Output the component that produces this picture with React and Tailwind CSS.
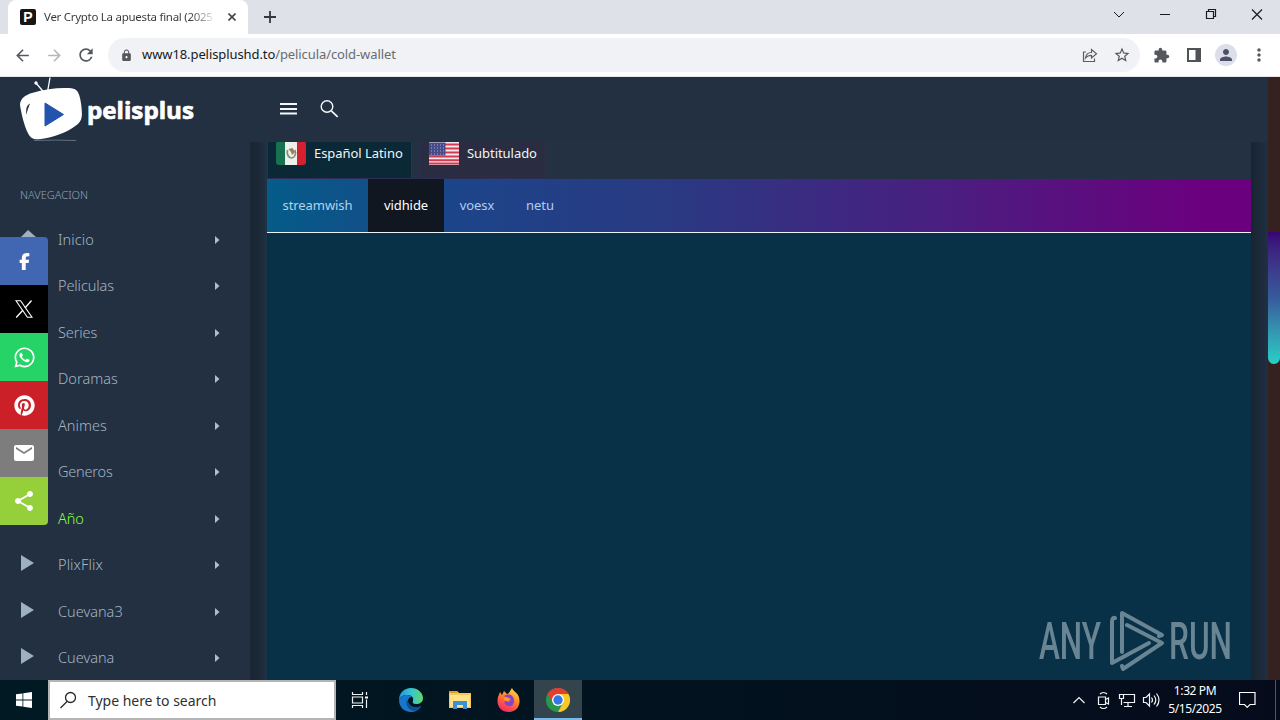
import React from 'react';
import {
  MdArrowBack,
  MdArrowForward,
  MdRefresh,
  MdLock,
  MdStarBorder,
  MdExtension,
  MdPerson,
  MdMoreVert,
  MdEmail,
  MdShare,
} from 'react-icons/md';
import { FaFacebookF, FaWhatsapp, FaPinterest } from 'react-icons/fa6';

const menuItems = [
  { name: 'Inicio', tracking: 'tracking-[0.1px]' },
  { name: 'Peliculas', tracking: 'tracking-[-0.1px]' },
  { name: 'Series', tracking: 'tracking-[-0.1px]' },
  { name: 'Doramas', tracking: 'tracking-[0.05px]' },
  { name: 'Animes', tracking: 'tracking-[0.05px]' },
  { name: 'Generos', tracking: 'tracking-[-0.2px]' },
  { name: 'Año', tracking: 'tracking-[-0.1px]', active: true },
  { name: 'PlixFlix', tracking: 'tracking-[0.1px]', play: true },
  { name: 'Cuevana3', tracking: 'tracking-[0px]', play: true },
  { name: 'Cuevana', tracking: 'tracking-[0px]', play: true },
];

const servers = [
  { name: 'streamwish', className: 'w-[101px] text-[#b3d3ec]' },
  { name: 'vidhide', className: 'w-[76px] bg-[#101720] text-white' },
  { name: 'voesx', className: 'w-[66px] text-[#b0cdf3]' },
  { name: 'netu', className: 'w-[60px] text-[#b0cdf3]' },
];

const XIcon = () => (
  <svg width="18" height="18" viewBox="0 0 18 18" fill="none" stroke="#fff" strokeWidth="1.1">
    <path d="M1 .8h4.600L17 17.200h-4.600z" />
    <path d="M16.500.5L10 8M7.800 10.300L1.200 17.500" strokeWidth="1.300" />
  </svg>
);

const shareButtons = [
  { name: 'facebook', bg: 'bg-[#4267b2] rounded-tr-[4px]', icon: <FaFacebookF size={17} /> },
  { name: 'x', bg: 'bg-black', icon: <XIcon /> },
  { name: 'whatsapp', bg: 'bg-[#25d366]', icon: <FaWhatsapp size={23} /> },
  { name: 'pinterest', bg: 'bg-[#cb2027]', icon: <FaPinterest size={21} /> },
  { name: 'email', bg: 'bg-[#7d7d7d]', icon: <MdEmail size={24} /> },
  { name: 'share', bg: 'bg-[#95d03a] rounded-br-[4px]', icon: <MdShare size={24} /> },
];

const TabStrip = () => (
  <div className="flex h-[34px] bg-[#dee1e8] pl-2">
    <div className="flex h-full w-[240px] items-center rounded-t-lg bg-white pl-3 pr-[10px]">
      <div className="flex h-4 w-4 items-center justify-center rounded-[2px] bg-[#161616] font-['Liberation_Sans',sans-serif] text-[14px] font-bold text-white">
        P
      </div>
      <div className="ml-2 w-[172px] whitespace-nowrap bg-gradient-to-r from-[#35383c] from-85% to-white bg-clip-text text-[11.5px] tracking-[-0.28px] text-transparent">
        Ver Crypto La apuesta final (2025
      </div>
      <svg className="ml-3 shrink-0" width="8" height="8" viewBox="0 0 8 8" stroke="#43474b" strokeWidth="1.6">
        <path d="M.5.5l7 7M7.5.5l-7 7" />
      </svg>
    </div>
    <div className="flex flex-1 items-center">
      <svg className="ml-4" width="12" height="12" viewBox="0 0 12 12" stroke="#35383d" strokeWidth="1.8">
        <path d="M6 0v12M0 6h12" />
      </svg>
    </div>
    <svg width="180" height="34" viewBox="1100 0 180 34" fill="none" stroke="#1b1b1d" strokeWidth="1">
      <path d="M1114 12l5 5 5-5" />
      <path d="M1160 14.5h10" />
      <path d="M1206.5 11.5h7v7h-7zM1208.5 11.500v-2h7v7h-2" strokeWidth="1.2" />
      <path d="M1252 9.500l10 10M1262 9.500l-10 10" strokeWidth="1.2" />
    </svg>
  </div>
);

const Toolbar = () => (
  <div className="flex h-[43px] items-center border-b border-[#e4e7ea] bg-white pl-[13px] text-[#54585d]">
    <MdArrowBack size={19} />
    <MdArrowForward size={19} className="ml-[13px] text-[#b4b6b9]" />
    <MdRefresh size={20} className="ml-[12px]" />
    <div className="ml-3 flex h-[34px] w-[1032px] items-center rounded-full bg-[#f0f2f5] pl-3">
      <MdLock size={13} />
      <div className="ml-[9px] flex-1 whitespace-nowrap text-[13px] tracking-[-0.09px] text-[#696d72]">
        <span className="text-[#17191c]">www18.pelisplushd.to</span>/pelicula/cold-wallet
      </div>
      <svg width="16" height="16" viewBox="0 0 16 16" fill="none" stroke="#5b5f64" strokeWidth="1.2">
        <path d="M4 5H1.500v9.500h11v-3" />
        <path d="M3.500 11c.5-4 3-5.500 6-5.500V2.500l5 4.300-5 4.200V8.300c-2.500 0-4.500.7-6 2.700z" />
      </svg>
      <MdStarBorder size={18} className="ml-[15px] mr-[9px]" />
    </div>
    <MdExtension size={17} className="ml-[13px]" />
    <svg className="ml-[17px]" width="14" height="14" viewBox="0 0 14 14">
      <path fill="#4f5358" fillRule="evenodd" d="M0 0h14v14H0zM2 2v10h6.500V2z" />
    </svg>
    <div className="ml-[14px] flex h-[22px] w-[22px] items-center justify-center rounded-full bg-[#dcdfea] text-[#4b5267]">
      <MdPerson size={18} />
    </div>
    <MdMoreVert size={20} className="ml-[12px]" />
  </div>
);

const Header = () => (
  <header className="flex h-[65px] shrink-0 items-start bg-[#223042]">
    <svg width="250" height="65" viewBox="0 77 250 65">
      <g stroke="#fff" strokeWidth="1.3">
        <path d="M36 83L44 92.500M50 77.500L47.500 92" />
      </g>
      <circle cx="36" cy="83" r="1.700" fill="#fff" />
      <path
        fill="#fff"
        d="M20 105c0-6 5-10 12-12 13-4 25-5.500 37-5 7 .3 9 3 10.500 8 1.500 6 2.300 11 2.400 18 0 6-2 9-8 13-9 6-20 10-33 12-7 1-10-.5-12.500-5-4-7-7-20-8.400-29z"
      />
      <path d="M30 103.500c-3 1.500-4.500 4.500-3.500 11.500.5-4 2-7.500 3.500-11.500z" fill="#223042" />
      <path d="M45 103l18.500 11.500L45 126z" fill="#2253ad" stroke="#2253ad" strokeLinejoin="round" />
      <path d="M34 140.500q22-.8 42 0" fill="none" stroke="#70808d" strokeWidth=".8" />
      <text
        x="87"
        y="118.500"
        fill="#fff"
        stroke="#fff"
        strokeWidth="0.7"
        strokeLinejoin="round"
        fontSize="23"
        fontWeight="700"
        fontFamily="Open Sans, sans-serif"
        textLength="107"
        lengthAdjust="spacingAndGlyphs"
      >
        pelisplus
      </text>
    </svg>
    <svg width="100" height="65" viewBox="250 77 100 65" fill="none" stroke="#f4f8fa">
      <path d="M280 104h17M280 109h17M280 113.500h17" strokeWidth="1.900" />
      <circle cx="327" cy="106.500" r="5.800" strokeWidth="1.400" />
      <path d="M331.300 110.800l6.400 6" strokeWidth="1.700" />
    </svg>
  </header>
);

const Sidebar = () => (
  <aside className="w-[250px] shrink-0 overflow-hidden bg-[#223042] text-[#a6b4c2]">
    <div className="h-[74.5px] pl-5 pt-[43px] text-[11px] font-light leading-5 tracking-[0.02px] text-[#94a3b2]">
      NAVEGACION
    </div>
    {menuItems.map((item) => (
      <div key={item.name} className="flex h-[46.5px] items-center pl-5 pr-[30px]">
        <div className="w-[38px]">
          {item.play && (
            <svg className="-mt-1" width="14" height="16" viewBox="0 0 14 16" fill="#9fb0bf">
              <path d="M1 0l13 8-13 8z" />
            </svg>
          )}
          {item.name === 'Inicio' && (
            <svg className="-mt-1" width="16" height="16" viewBox="0 0 16 16" fill="#9fb0bf">
              <path d="M8 0l8 7v9H1V7z" />
            </svg>
          )}
        </div>
        <span
          className={`flex-1 text-[14.5px] font-light ${item.tracking} ${
            item.active ? 'text-[#8cff3c]' : ''
          }`}
        >
          {item.name}
        </span>
        <svg width="5" height="8" viewBox="0 0 5 8" fill="#b1bec9">
          <path d="M0 0l4.500 4L0 8z" />
        </svg>
      </div>
    ))}
  </aside>
);

const MexicoFlag = () => (
  <svg width="30" height="24" viewBox="0 0 30 24">
    <path d="M10 0H3a3 3 0 0 0-3 3v18a3 3 0 0 0 3 3h7z" fill="#18724f" />
    <path d="M9 0h12v24H9z" fill="#eef0ec" />
    <path d="M21 0h6a3 3 0 0 1 3 3v18a3 3 0 0 1-3 3h-6z" fill="#d5202f" />
    <path d="M11.500 9c-1 4 1 8 4 8 3 0 5-4 3.500-8" fill="none" stroke="#759674" strokeWidth="1.700" />
    <path d="M12.500 8l4-1 2.500 4-3 3-1-3z" fill="#a47b57" />
  </svg>
);

const UsaFlag = () => (
  <svg width="30" height="24" viewBox="0 0 30 24">
    <path d="M0 0h30v24H0z" fill="#f2e9ee" />
    <path d="M0 3.500h30M0 7.500h30M0 11.500h30M0 15.500h30M0 19.200h30M0 22.500h30" stroke="#d23a50" strokeWidth="1.900" />
    <path d="M0 1.500h16.500v13H0z" fill="#464b87" />
    <path d="M2 4h14M2 7h14M2 10h14M2 13h14" stroke="#a6a9cd" strokeWidth="1" strokeDasharray="1 2" />
  </svg>
);

const Player = () => (
  <main className="flex w-[984px] shrink-0 flex-col bg-[#083147]">
    <div className="flex h-[37px] shrink-0 gap-2 overflow-hidden bg-[#243143] text-[13px] text-[#f1f4f6]">
      <div className="flex w-[145px] items-start border-x border-b border-[#302d59] bg-[#0b2837] pl-2">
        <span className="-mt-px">
          <MexicoFlag />
        </span>
        <span className="ml-2 mt-[1px] whitespace-nowrap leading-5 tracking-[-0.05px]">Español Latino</span>
      </div>
      <div className="flex w-[126px] items-start border-x border-b border-[#302d52] bg-[#2a2c41] pl-2">
        <span className="-mt-px">
          <UsaFlag />
        </span>
        <span className="ml-2 mt-[1px] leading-5 tracking-[-0.05px]">Subtitulado</span>
      </div>
    </div>
    <div className="flex h-[54px] shrink-0 border-b border-[#edf4f8] bg-[linear-gradient(to_right,#045c88_0%,#1d4489_20%,#293a83_40%,#491f80_68%,#6b007e_95%)]">
      {servers.map((server) => (
        <div
          key={server.name}
          className={`flex items-center justify-center text-[13px] tracking-[-0.08px] ${server.className}`}
        >
          {server.name}
        </div>
      ))}
    </div>
  </main>
);

const Scrollbar = () => (
  <div className="w-3 shrink-0 bg-[#35211f] pt-[155px]">
    <div className="h-[132px] rounded-b-[6px] bg-gradient-to-b from-[#390275] via-[#365b9b] to-[#25d0c5]" />
  </div>
);

const Watermark = () => (
  <svg
    className="absolute left-[1030px] top-[600px]"
    width="220"
    height="76"
    viewBox="1030 600 220 76"
    fill="#6f8998"
    opacity="0.95"
  >
    <g fontFamily="Roboto, sans-serif" fontSize="51" fontWeight="500">
      <text x="1039" y="659" textLength="62" lengthAdjust="spacingAndGlyphs">ANY</text>
      <text x="1169" y="659" textLength="63" lengthAdjust="spacingAndGlyphs">RUN</text>
    </g>
    <g fill="none" stroke="#6f8998" strokeWidth="4" strokeLinecap="round" strokeLinejoin="round">
      <path d="M1115 618c-2-1-3 1-3 4v41l37-20" />
      <path d="M1122 652v-39l40 22-3 1" />
      <path d="M1127 625l35 18-39 26-1-3" />
    </g>
  </svg>
);

const EdgeIcon = () => (
  <svg width="24" height="24" viewBox="0 0 24 24">
    <defs>
      <linearGradient id="edgeTop" x1="0" x2="1">
        <stop offset="0" stopColor="#2197dc" />
        <stop offset=".5" stopColor="#35c4d2" />
        <stop offset="1" stopColor="#62da67" />
      </linearGradient>
    </defs>
    <path d="M0 12C0 5 5 0 12 0s12 5 12 10c0 4-3 6-7 6-3 0-4-1-3-3 1-4-2-6-6-6-4 0-7 2-8 5z" fill="url(#edgeTop)" />
    <path d="M0 12c1-3 4-5 8-5 2 0 4 1 5 2-4 0-5 4-3 7 3 4 8 4 12 2-2 4-6 6-10 6C5 24 0 19 0 12z" fill="#1877ca" />
    <path d="M8 11c-2 5 1 10 6 12 3-.5 6-2 8-5-4 2-9 2-12-2-1-2-1.500-3.500-2-5z" fill="#104e91" />
  </svg>
);

const FolderIcon = () => (
  <svg width="22" height="20" viewBox="0 0 22 20">
    <path d="M0 1h8l2 2h12v15H0z" fill="#f5c75b" />
    <path d="M0 1h8l2 2H0z" fill="#e49c26" />
    <path d="M1 5h20v12H1z" fill="#ffe189" />
    <path d="M4 11h14v8h-4v-4H8v4H4z" fill="#3d91d2" />
  </svg>
);

const FirefoxIcon = () => (
  <svg width="24" height="24" viewBox="0 0 24 24">
    <defs>
      <linearGradient id="fox" x1=".8" y1="0" x2=".3" y2="1">
        <stop offset="0" stopColor="#ffe43c" />
        <stop offset=".5" stopColor="#ff792f" />
        <stop offset="1" stopColor="#f52467" />
      </linearGradient>
    </defs>
    <path d="M3 4l2 3 2-4 3 3c2 0 3-3 5-6 1 3 4 4 6 7 4 8 0 17-9 17S-1 17 1 9z" fill="url(#fox)" />
    <path d="M7 8c5-3 10-1 10 5 0 4-3 6-6 5-4-1-4-4-3-5l4 1 2-3-4-1z" fill="#8543c9" />
    <path d="M8 9l5 1-2 3-4-1z" fill="#ff9b2d" />
  </svg>
);

const ChromeIcon = () => (
  <svg width="24" height="24" viewBox="0 0 24 24">
    <circle cx="12" cy="12" r="12" fill="#27984a" />
    <path d="M1.600 6A12 12 0 0 1 22.400 6H12v6l-5 3z" fill="#e43d30" />
    <path d="M22.400 6A12 12 0 0 1 12 24l5-9-5-9z" fill="#fbc727" />
    <circle cx="12" cy="12" r="6" fill="#fff" />
    <circle cx="12" cy="12" r="4.700" fill="#3478e6" />
  </svg>
);

const Taskbar = () => (
  <footer className="flex h-10 bg-gradient-to-r from-[#001923] via-[#02131f] to-[#050b1a] text-white">
    <div className="flex w-12 items-center justify-center">
      <svg width="16" height="16" viewBox="0 0 16 16" fill="#fff">
        <path d="M0 2.300L6.500 1.400v6.200H0zM7.300 1.300L16 0v7.600H7.300zM0 8.400h6.500v6.200L0 13.700zM7.300 8.400H16V16l-8.700-1.300z" />
      </svg>
    </div>
    <div className="flex w-[288px] items-center border-2 border-[#b4b4b4] bg-white pl-[9px] text-[#303030]">
      <svg width="18" height="18" viewBox="0 0 18 18" fill="none" stroke="#292929" strokeWidth="1.300">
        <circle cx="11.500" cy="6.500" r="5" />
        <path d="M8 10.500L1.500 17" />
      </svg>
      <span className="ml-[11px] mt-px text-[14px] tracking-[-0.03px]">Type here to search</span>
    </div>
    <div className="flex w-12 items-center justify-center">
      <svg width="18" height="16" viewBox="0 0 18 16" fill="none" stroke="#edf1f4" strokeWidth="1.200">
        <path d="M1.500 0v2.500h10V0M1.500 5h10v6h-10zM1.500 16v-2.500h10V16M15.500 0v3M15.500 7.500V16" />
        <path d="M14 4.500h3v2h-3z" fill="#fff" stroke="none" />
      </svg>
    </div>
    <div className="flex w-[54px] items-center justify-center"><EdgeIcon /></div>
    <div className="flex w-[44px] items-center justify-center"><FolderIcon /></div>
    <div className="flex w-[52px] items-center justify-center pl-[2px]"><FirefoxIcon /></div>
    <div className="flex w-12 items-center justify-center border-b-2 border-[#76b9ed] bg-[#34444d] pt-[2px]"><ChromeIcon /></div>
    <div className="flex-1" />
    <svg width="100" height="40" viewBox="1065 680 100 40" fill="none" stroke="#f0f3f6" strokeWidth="1.200">
      <path d="M1073.500 703l5.500-5.500 5.500 5.500" />
      <path d="M1098.500 697h7v7.500h-7zM1105.500 699.500l3-1.500v6l-3-1.500M1100 694c2-2 5-2 7 0M1100 707c2 2 5 2 7 0" />
      <path d="M1123.500 694.500h11v8h-11M1128 703v3.500M1124 706.500h8M1119.500 694.500h4v4h-4zM1121.500 698.500v6.500" />
      <path d="M1143.500 697.500h2.500l3.500-3.500v12l-3.500-3.500h-2.500zM1151.500 697.500q2 2.500 0 5M1154 695.500q3.500 4.500 0 9M1156.500 693.500q5 6.500 0 13" />
    </svg>
    <div className="flex w-[60px] flex-col items-center justify-center text-[12px] leading-[18px] tracking-[-0.4px]">
      <span>1:32 PM</span>
      <span>5/15/2025</span>
    </div>
    <div className="flex w-[55px] items-center pl-[14px]">
      <svg width="17" height="16" viewBox="0 0 17 16" fill="none" stroke="#fff" strokeWidth="1.200">
        <path d="M.5.500h15.500v12h-5L8.200 15.300 5.500 12.500h-5z" />
      </svg>
      <div className="ml-auto mr-[4px] h-10 w-px bg-[#4e5668]" />
    </div>
  </footer>
);

const App = () => {
  return (
    <div className="relative flex h-[720px] w-[1280px] flex-col overflow-hidden font-['Noto_Sans','Open_Sans',sans-serif]">
      <TabStrip />
      <Toolbar />
      <div className="flex h-[603px] overflow-hidden">
        <div className="flex w-[1268px] flex-col">
          <Header />
          <div className="flex min-h-0 flex-1 bg-[#1d2836]">
            <Sidebar />
            <div className="w-[17px] shrink-0 bg-gradient-to-r from-[#192532] via-[#1c2836] to-[#203346]" />
            <Player />
            <div className="flex-1 bg-gradient-to-r from-[#182431] to-[#203042]" />
          </div>
        </div>
        <Scrollbar />
      </div>
      <Taskbar />

      {/* Floating share buttons */}
      <div className="absolute left-0 top-[237px] w-12 text-white">
        {shareButtons.map((button) => (
          <div key={button.name} className={`flex h-12 items-center justify-center ${button.bg}`}>
            {button.icon}
          </div>
        ))}
      </div>

      <Watermark />
    </div>
  );
};

export default App;
